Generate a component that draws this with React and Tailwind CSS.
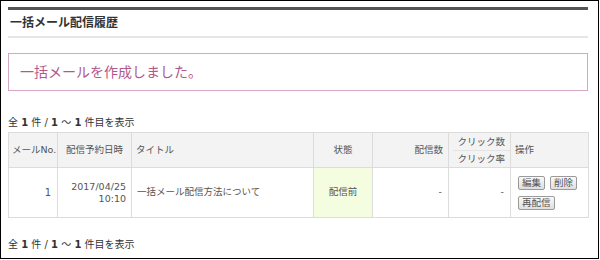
import React from 'react';

const font = { fontFamily: '"DejaVu Sans", "Noto Sans CJK JP", sans-serif' };

function Count() {
    return (
        <p className="text-[10px] text-[#333] leading-none">
            全 <b>1</b> 件 / <b>1</b> ～ <b>1</b> 件目を表示
        </p>
    );
}

function Btn({ children }) {
    return (
        <button className="h-[14px] px-[3px] border border-[#9a9a9a] rounded-[2px] bg-gradient-to-b from-[#fafafa] to-[#dedede] text-[9.5px] leading-none text-[#555]">
            {children}
        </button>
    );
}

export default function App() {
    return (
        <div className="w-[599px] h-[259px] border border-black bg-white overflow-hidden" style={font}>
            <div className="ml-[7px] mt-[6px] w-[580px]">
                {/* heading */}
                <div className="border-t-[3px] border-[#555]">
                    <h1 className="h-[28px] flex items-center pl-[2px] text-[12px] font-bold text-[#333] border-b-2 border-[#e6e6e6]">
                        一括メール配信履歴
                    </h1>
                </div>

                {/* notice */}
                <div className="mt-[15px] h-[38px] border border-[#d4a8c2] flex items-center pl-[11px] text-[14px] text-[#b4578a]">
                    一括メールを作成しました。
                </div>

                <div className="mt-[27px]"><Count /></div>

                <table className="mt-[4px] w-[580px] border-collapse table-fixed text-[9.5px] text-[#555]">
                    <colgroup>
                        <col className="w-[49px]" />
                        <col className="w-[74px]" />
                        <col className="w-[182px]" />
                        <col className="w-[59px]" />
                        <col className="w-[76px]" />
                        <col className="w-[62px]" />
                        <col className="w-[78px]" />
                    </colgroup>
                    <thead>
                        <tr className="h-[35px] bg-[#f3f3f3]">
                            <th className="border border-[#dcdcdc] font-normal text-left pl-[3px]">メールNo.</th>
                            <th className="border border-[#dcdcdc] font-normal text-center">配信予約日時</th>
                            <th className="border border-[#dcdcdc] font-normal text-left pl-[4px]">タイトル</th>
                            <th className="border border-[#dcdcdc] font-normal text-center">状態</th>
                            <th className="border border-[#dcdcdc] font-normal text-right pr-[5px]">配信数</th>
                            <th className="border border-[#dcdcdc] font-normal text-right p-0">
                                <div className="flex flex-col items-end">
                                    <span className="pr-[5px] leading-[16px]">クリック数</span>
                                    <span className="self-stretch ml-[4px] border-t border-[#e4e4e4]" />
                                    <span className="pr-[5px] leading-[16px]">クリック率</span>
                                </div>
                            </th>
                            <th className="border border-[#dcdcdc] font-normal text-left pl-[4px]">操作</th>
                        </tr>
                    </thead>
                    <tbody>
                        <tr className="h-[50px]">
                            <td className="border border-[#dcdcdc] text-right pr-[6px] text-[10px]">1</td>
                            <td className="border border-[#dcdcdc] text-right pr-[5px] leading-[12px] text-[9.5px]">
                                2017/04/25<br />10:10
                            </td>
                            <td className="border border-[#dcdcdc] text-left pl-[5px]">一括メール配信方法について</td>
                            <td className="border border-[#dcdcdc] text-center bg-[#f5fde1]">配信前</td>
                            <td className="border border-[#dcdcdc] text-right pr-[6px]">-</td>
                            <td className="border border-[#dcdcdc] text-right pr-[6px]">-</td>
                            <td className="border border-[#dcdcdc] pl-[7px] py-[4px]">
                                <div className="flex flex-wrap gap-x-[5px] gap-y-[6px] w-[66px]">
                                    <Btn>編集</Btn>
                                    <Btn>削除</Btn>
                                    <Btn>再配信</Btn>
                                </div>
                            </td>
                        </tr>
                    </tbody>
                </table>

                <div className="mt-[22px]"><Count /></div>
            </div>
        </div>
    );
}
